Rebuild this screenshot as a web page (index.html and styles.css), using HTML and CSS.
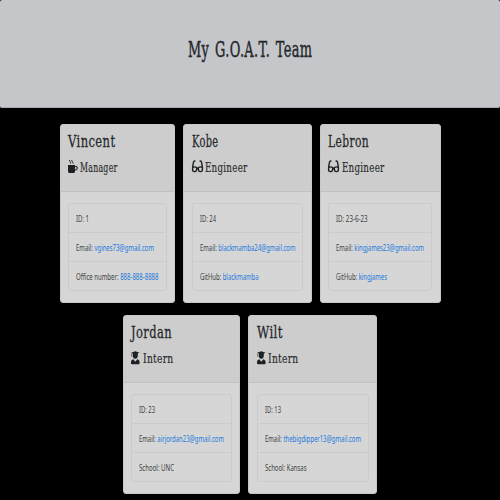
FILE: index.html
```html
<!DOCTYPE html>
<html lang="en">
<head>
<meta charset="utf-8">
<title>My G.O.A.T. Team</title>
<link rel="stylesheet" href="styles.css">
</head>
<body>
<header class="hero"><svg class="hero-title" viewBox="0 0 125 30"><text x="0" y="22" textLength="124.5" lengthAdjust="spacingAndGlyphs">My G.O.A.T. Team</text></svg></header>
<main class="team" id="team"></main>
<script src="team.js"></script>
</body>
</html>
```
FILE: styles.css
```css
* { box-sizing: border-box; }
body { margin: 0; height: 500px; overflow: hidden; background: #000; color: #212529; font-family: "Noto Sans", sans-serif; }
svg { display: block; overflow: visible; }
.hero { height: 108px; display: flex; justify-content: center; padding-top: 35px; background: #c5c6ca; border-bottom: 1px solid #aaabae; border-radius: 2px; }
.hero-title { width: 125px; height: 30px; font: 21.5px "DejaVu Serif", serif; word-spacing: 2px; letter-spacing: .6px; fill: #24282b; stroke: #24282b; stroke-width: .45px; }
.team { padding-top: 16px; }
.row { display: flex; justify-content: center; gap: 8px; height: 179px; margin-bottom: 12.3px; }
.card { height: 179px; background: #d6d6d6; border: 1px solid #c8c8c8; border-radius: 3px; }
.card-head { height: 67px; padding: 0 7.5px; background: #cdcdcd; border-bottom: 1px solid #c1c1c1; border-radius: 2px 2px 0 0; }
.name { width: 100%; height: 33px; font: 16.5px "DejaVu Serif", serif; letter-spacing: .6px; fill: #24282b; stroke: #24282b; stroke-width: .3px; }
.role { display: flex; }
.icon { height: 14px; margin-top: 1.5px; fill: #1d2125; flex: none; }
.role-name { height: 20px; font: 12.5px "DejaVu Serif", serif; letter-spacing: .4px; fill: #2a2e31; stroke: #2a2e31; stroke-width: .2px; flex: 1; min-width: 0; }
.list { margin: 11px 7.5px 0; border: 1px solid #cbcbcb; border-radius: 3px; }
.item { height: 29px; padding-left: 7px; border-bottom: 1px solid #cbcbcb; }
.item:last-child { height: 28px; border-bottom: 0; }
.item svg { width: 100%; height: 28px; font-size: 9px; fill: #3c3f42; }
.link { fill: #2179dc; }
```
FILE: team.js
```javascript
const icons = {
  mug: '<path d="M0 5h7v1h1.2c1 0 1.5.9 1.5 2.1 0 1.5-.8 2.4-2 2.4H7v.7c0 1.2-.6 1.8-1.5 1.8h-4C.6 13 0 12.4 0 11.2zM7 7v2.4h.7c.6 0 .9-.4.9-1.3 0-.8-.2-1.1-.7-1.1z"/><path d="M1.4 0c-.2 1.4 1.5 1.7 1.3 3.6M3.7 0c-.2 1.4 1.5 1.7 1.3 3.6" fill="none" stroke="#1d2125" stroke-width="1"/>',
  glasses: '<path d="M3.4 1H2.7c-.9 0-1.2.8-1.4 1.8L.6 7.4v2.2c0 1.3.6 2 1.6 2h.6c1.2 0 1.7-.8 1.8-2l.1-2C3.3 6.7 1.8 6.7.7 7.4M7.6 1h.7c.9 0 1.2.8 1.4 1.8l.7 4.6v2.2c0 1.3-.6 2-1.6 2h-.6c-1.2 0-1.7-.8-1.8-2l-.1-2c1.4-.9 2.9-.9 4-.2M4.6 8.7h1.8" fill="none" stroke="#1d2125" stroke-width="1.4"/>',
  grad: '<path d="M0 1.8 4.3.3l4.3 1.5-1.8.7v1.9c0 2-.9 3.3-2.5 3.3S1.8 6.4 1.8 4.4V2.5L1 2.3v1.8l.3 1.5H.3l.3-1.5V2.1zM2.3 8.2l2 2.5 2-2.5c1.5.3 2.3 1.5 2.3 3v1c0 .6-.3 1-.8 1h-7c-.5 0-.8-.4-.8-1v-1c0-1.5.8-2.7 2.3-3z"/>'
};

const rows = [
  [
    { w: 115.5, name: ["Vincent", 47.5], role: ["Manager", 37.5], icon: ["mug", 12.3], items: [["ID: 1", "", 13], ["Email: ", "vgines73@gmail.com", 78], ["Office number: ", "888-888-8888", 82.5]] },
    { w: 128.5, name: ["Kobe", 26.5], role: ["Engineer", 42.5], icon: ["glasses", 13.5], items: [["ID: 24", "", 16], ["Email: ", "blackmamba24@gmail.com", 95.5], ["GitHub: ", "blackmamba", 58.5]] },
    { w: 121, name: ["Lebron", 41], role: ["Engineer", 42.5], icon: ["glasses", 13.5], items: [["ID: 23-6-23", "", 31.5], ["Email: ", "kingjames23@gmail.com", 88], ["GitHub: ", "kingjames", 51]] }
  ],
  [
    { w: 117.6, name: ["Jordan", 41], role: ["Intern", 30.5], icon: ["grad", 11.3], items: [["ID: 23", "", 16], ["Email: ", "airjordan23@gmail.com", 85], ["School: UNC", "", 35]] },
    { w: 129, name: ["Wilt", 26], role: ["Intern", 30.5], icon: ["grad", 11.3], items: [["ID: 13", "", 16], ["Email: ", "thebigdipper13@gmail.com", 96], ["School: Kansas", "", 41.5]] }
  ]
];

const label = (cls, y, body, width) =>
  `<svg class="${cls}"><text x="0" y="${y}" xml:space="preserve" textLength="${width}" lengthAdjust="spacingAndGlyphs">${body}</text></svg>`;

const card = c => `<section class="card" style="width:${c.w}px">
  <div class="card-head">${label("name", 21.7, c.name[0], c.name[1])}
    <div class="role"><svg class="icon" style="width:${c.icon[1]}px">${icons[c.icon[0]]}</svg>${label("role-name", 14, c.role[0], c.role[1])}</div>
  </div>
  <div class="list">${c.items.map(([text, link, width]) =>
    `<div class="item">${label("", 17.8, text + (link ? `<tspan class="link">${link}</tspan>` : ""), width)}</div>`).join("")}</div>
</section>`;

document.getElementById("team").innerHTML =
  rows.map(r => `<div class="row">${r.map(card).join("")}</div>`).join("");
```
